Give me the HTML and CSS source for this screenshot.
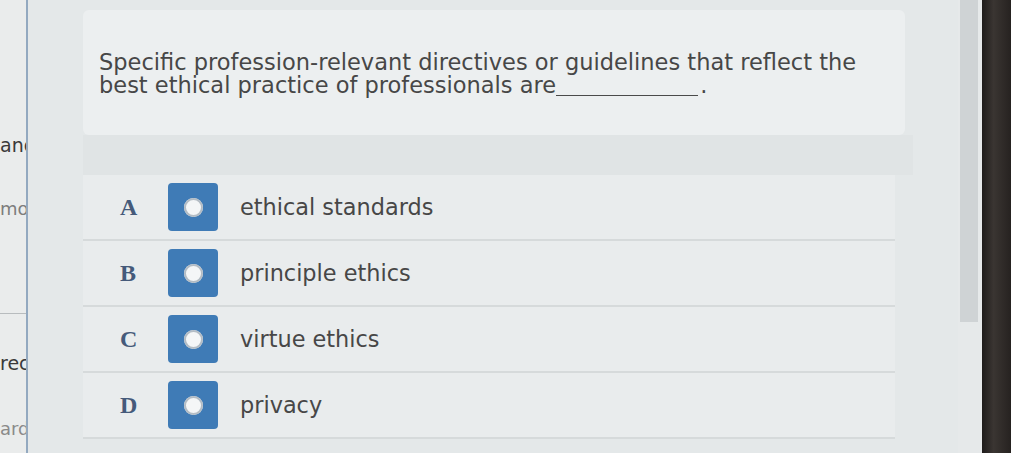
FILE: index.html
```html
<!DOCTYPE html>
<html lang="en">
<head>
<meta charset="utf-8">
<title>Question</title>
<link rel="stylesheet" href="styles.css">
</head>
<body>
<div class="screen">
  <aside class="side">
    <div class="side-word w1">and</div>
    <div class="side-word w2">mo</div>
    <div class="side-rule"></div>
    <div class="side-word w3">rec</div>
    <div class="side-word w4">ard</div>
  </aside>
  <main class="main">
    <section class="question">
      <p class="q-text">Specific profession-relevant directives or guidelines that reflect the best ethical practice of professionals are<span class="blank"></span>.</p>
    </section>
    <div class="band"></div>
    <ul class="options">
      <li class="option">
        <span class="letter">A</span>
        <span class="radio"><span class="dot"></span></span>
        <span class="label">ethical standards</span>
      </li>
      <li class="option">
        <span class="letter">B</span>
        <span class="radio"><span class="dot"></span></span>
        <span class="label">principle ethics</span>
      </li>
      <li class="option">
        <span class="letter">C</span>
        <span class="radio"><span class="dot"></span></span>
        <span class="label">virtue ethics</span>
      </li>
      <li class="option">
        <span class="letter">D</span>
        <span class="radio"><span class="dot"></span></span>
        <span class="label">privacy</span>
      </li>
    </ul>
  </main>
  <div class="scrollbar"><div class="thumb"></div></div>
  <div class="bezel"></div>
</div>
</body>
</html>
```
FILE: styles.css
```css
* { box-sizing: border-box; }
html, body { margin: 0; padding: 0; }
body {
  width: 1011px;
  height: 453px;
  overflow: hidden;
  background: #2a2624;
  font-family: "DejaVu Sans", Verdana, sans-serif;
}
.screen {
  display: flex;
  width: 1011px;
  height: 453px;
}
.side {
  width: 28px;
  flex: none;
  background: #eaecec;
  border-right: 2px solid #93a9c0;
  overflow: hidden;
  white-space: nowrap;
  padding-top: 134px;
}
.side-word {
  font-size: 19px;
  line-height: 22px;
  color: #3a3a3a;
}
.side-word.w2 { margin-top: 42px; color: #7d7d7d; font-size: 18px; }
.side-rule {
  height: 1px;
  background: #b8bcbe;
  margin-top: 93px;
  margin-right: -4px;
}
.side-word.w3 { margin-top: 38px; }
.side-word.w4 { margin-top: 44px; color: #8a8a8a; font-size: 18px; }

.main {
  flex: 1;
  background: #e4e8e9;
  padding: 10px 0 0 55px;
}
.question {
  width: 822px;
  height: 125px;
  background: #eceff0;
  border-radius: 6px;
  padding: 41px 20px 0 16px;
}
.q-text {
  margin: 0;
  max-width: 785px;
  font-size: 22.5px;
  line-height: 23px;
  color: #474747;
}
.blank {
  display: inline-block;
  width: 142px;
  height: 2px;
  margin-right: 2px;
  border-bottom: 1.5px solid #4a4a4a;
  vertical-align: -3px;
}
.band {
  width: 830px;
  height: 40px;
  background: #e0e4e5;
}
.options {
  list-style: none;
  margin: 0;
  padding: 0;
  width: 812px;
}
.option {
  display: flex;
  align-items: center;
  height: 66px;
  padding-left: 37px;
  background: #e9eced;
  border-bottom: 2px solid #d6dadb;
}
.letter {
  width: 48px;
  font-family: "Liberation Serif", "Times New Roman", serif;
  font-weight: bold;
  font-size: 24px;
  color: #455a7a;
}
.radio {
  width: 50px;
  height: 48px;
  flex: none;
  border-radius: 4px;
  background: #3f7bb6;
  display: flex;
  align-items: center;
  justify-content: center;
}
.dot {
  width: 19px;
  height: 19px;
  border-radius: 50%;
  background: #f4f6f7;
  box-shadow: inset 0 0 0 2px #b3bcc4;
}
.label {
  margin-left: 22px;
  font-size: 22.4px;
  color: #474747;
}
.scrollbar {
  width: 24px;
  flex: none;
  background: #e6e9ea;
  padding-left: 2px;
}
.thumb {
  width: 18px;
  height: 322px;
  background: #cfd3d5;
}
.bezel {
  width: 29px;
  flex: none;
  background: linear-gradient(90deg, #1f1c1b 0, #3a3532 40%, #262220 100%);
}
```
